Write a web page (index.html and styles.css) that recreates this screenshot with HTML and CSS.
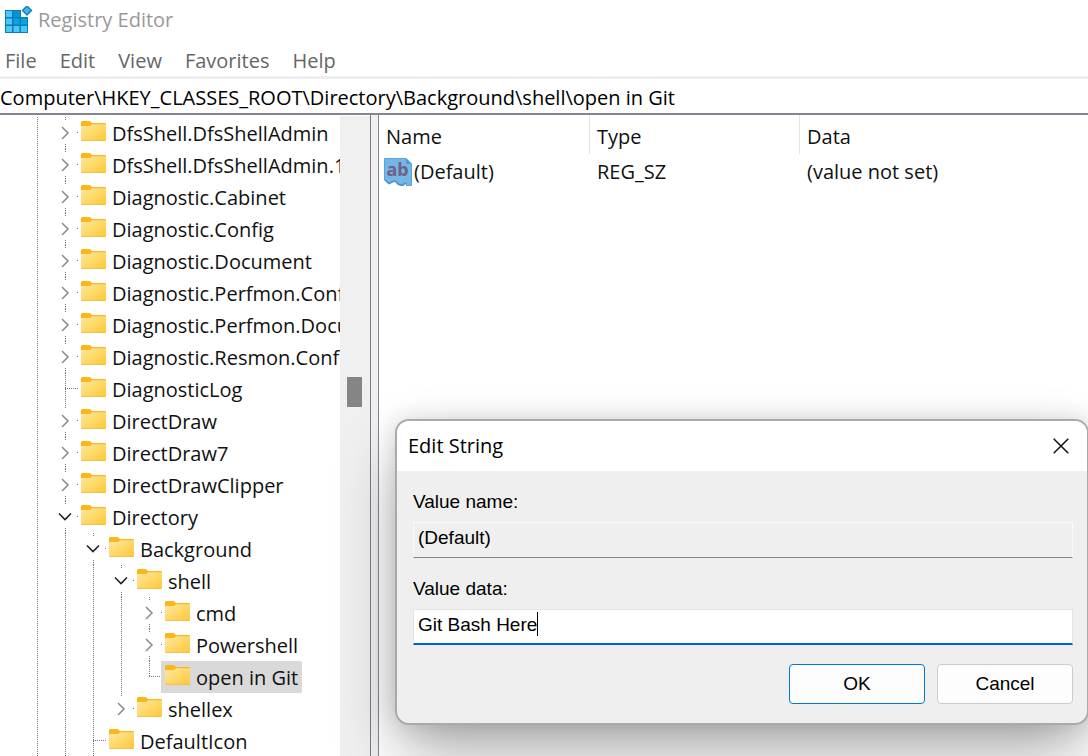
FILE: index.html
```html
<!DOCTYPE html>
<html lang="en">
<head>
<meta charset="utf-8">
<title>Registry Editor</title>
<link rel="stylesheet" href="styles.css">
</head>
<body>
<svg class="defs" width="0" height="0" aria-hidden="true">
  <defs>
    <linearGradient id="folder-face" x1="0" y1="0" x2="1" y2="1">
      <stop offset="0" stop-color="#ffe8a2"/><stop offset="1" stop-color="#ffc733"/>
    </linearGradient>
    <symbol id="folder" viewBox="0 0 25 20">
      <path d="M0 1.500Q0 0 1.500 0H8Q9 0 9.700 .7L11 2H24Q25 2 25 3V18H0Z" fill="#f9b71c"/>
      <path d="M0 6Q0 5 1 5H8.500Q9.500 5 10.200 4.200L11 3.200H25V18.500Q25 20 23.500 20H1.500Q0 20 0 18.500Z" fill="url(#folder-face)"/>
      <path d="M.5 19.400H24.500" stroke="#eebc45" stroke-width=".8"/>
    </symbol>
    <symbol id="closed" viewBox="0 0 14 14"><path d="M4 1L10 7L4 13" fill="none" stroke="#8b8b8b" stroke-width="1.500"/></symbol>
    <symbol id="open" viewBox="0 0 14 14"><path d="M1 3.500L7 9.500L13 3.500" fill="none" stroke="#222" stroke-width="1.600"/></symbol>
  </defs>
</svg>
<div class="window">
  <header class="titlebar">
    <svg class="app-icon" viewBox="0 0 28 28" aria-hidden="true">
      <path d="M0 4H16V11H23V27H0Z" fill="#087db8"/>
      <path d="M1 5H7V11H1ZM1 12.500H7V18.500H1ZM1 20H7V26H1ZM8.500 20H14.500V26H8.500ZM16 20H22V26H16Z" fill="#4fc6f8"/>
      <path d="M8.500 5H15V11H8.500Z" fill="#0b93cf"/>
      <path d="M8.500 12.500H14.500V18.500H8.500ZM16 12.500H22V18.500H16Z" fill="#08a5e2"/>
      <path d="M22 0L26.500 4.500L22 9L17.500 4.500Z" fill="#3fb5ea" stroke="#147caf" stroke-width="1.400" stroke-linejoin="round"/>
    </svg>
    <h1>Registry Editor</h1>
  </header>
  <nav class="menubar">
    <button type="button">File</button><button type="button">Edit</button><button type="button">View</button><button type="button">Favorites</button><button type="button">Help</button>
  </nav>
  <input class="address" aria-label="Address" value="Computer\HKEY_CLASSES_ROOT\Directory\Background\shell\open in Git">
  <main class="panes">
    <section class="tree-pane">
      <ul class="tree">
        <li class="row"><i class="guide"></i><i class="node"><svg><use href="#closed"/></svg></i><svg class="folder"><use href="#folder"/></svg><span>DfsShell.DfsShellAdmin</span></li>
        <li class="row"><i class="guide"></i><i class="node"><svg><use href="#closed"/></svg></i><svg class="folder"><use href="#folder"/></svg><span>DfsShell.DfsShellAdmin.1</span></li>
        <li class="row"><i class="guide"></i><i class="node"><svg><use href="#closed"/></svg></i><svg class="folder"><use href="#folder"/></svg><span>Diagnostic.Cabinet</span></li>
        <li class="row"><i class="guide"></i><i class="node"><svg><use href="#closed"/></svg></i><svg class="folder"><use href="#folder"/></svg><span>Diagnostic.Config</span></li>
        <li class="row"><i class="guide"></i><i class="node"><svg><use href="#closed"/></svg></i><svg class="folder"><use href="#folder"/></svg><span>Diagnostic.Document</span></li>
        <li class="row"><i class="guide"></i><i class="node"><svg><use href="#closed"/></svg></i><svg class="folder"><use href="#folder"/></svg><span>Diagnostic.Perfmon.Conf</span></li>
        <li class="row"><i class="guide"></i><i class="node"><svg><use href="#closed"/></svg></i><svg class="folder"><use href="#folder"/></svg><span>Diagnostic.Perfmon.Docu</span></li>
        <li class="row"><i class="guide"></i><i class="node"><svg><use href="#closed"/></svg></i><svg class="folder"><use href="#folder"/></svg><span>Diagnostic.Resmon.Conf</span></li>
        <li class="row"><i class="guide"></i><i class="node leaf"></i><svg class="folder"><use href="#folder"/></svg><span>DiagnosticLog</span></li>
        <li class="row"><i class="guide"></i><i class="node"><svg><use href="#closed"/></svg></i><svg class="folder"><use href="#folder"/></svg><span>DirectDraw</span></li>
        <li class="row"><i class="guide"></i><i class="node"><svg><use href="#closed"/></svg></i><svg class="folder"><use href="#folder"/></svg><span>DirectDraw7</span></li>
        <li class="row"><i class="guide"></i><i class="node"><svg><use href="#closed"/></svg></i><svg class="folder"><use href="#folder"/></svg><span>DirectDrawClipper</span></li>
        <li class="row"><i class="guide"></i><i class="node"><svg><use href="#open"/></svg></i><svg class="folder"><use href="#folder"/></svg><span>Directory</span></li>
        <li class="row"><i class="guide"></i><i class="guide"></i><i class="node"><svg><use href="#open"/></svg></i><svg class="folder"><use href="#folder"/></svg><span>Background</span></li>
        <li class="row"><i class="guide"></i><i class="guide"></i><i class="guide"></i><i class="node"><svg><use href="#open"/></svg></i><svg class="folder"><use href="#folder"/></svg><span>shell</span></li>
        <li class="row"><i class="guide"></i><i class="guide"></i><i class="guide"></i><i class="guide"></i><i class="node"><svg><use href="#closed"/></svg></i><svg class="folder"><use href="#folder"/></svg><span>cmd</span></li>
        <li class="row"><i class="guide"></i><i class="guide"></i><i class="guide"></i><i class="guide"></i><i class="node"><svg><use href="#closed"/></svg></i><svg class="folder"><use href="#folder"/></svg><span>Powershell</span></li>
        <li class="row selected"><i class="guide"></i><i class="guide"></i><i class="guide"></i><i class="guide"></i><i class="node leaf last"></i><svg class="folder"><use href="#folder"/></svg><span>open in Git</span></li>
        <li class="row"><i class="guide"></i><i class="guide"></i><i class="guide"></i><i class="node last"><svg><use href="#closed"/></svg></i><svg class="folder"><use href="#folder"/></svg><span>shellex</span></li>
        <li class="row"><i class="guide"></i><i class="guide"></i><i class="node leaf"></i><svg class="folder"><use href="#folder"/></svg><span>DefaultIcon</span></li>
      </ul>
      <div class="scrollbar"><div class="thumb"></div></div>
    </section>
    <section class="values">
      <table>
        <colgroup><col class="c-name"><col class="c-type"><col></colgroup>
        <thead><tr><th>Name</th><th>Type</th><th>Data</th></tr></thead>
        <tbody><tr>
          <td><div class="value-name"><svg class="string-icon" viewBox="0 0 28 28" aria-hidden="true"><path d="M.5 .5H22L27.500 6V27.500H22.500V25L18 27.500L13.500 26L12 23.500H9L5 25.500L.5 22Z" fill="#75b6e7" stroke="#5aa3da"/><path d="M22 0V6H28Z" fill="#5799cd"/><path d="M1 22L5 25.500L9 23.500H12L14 26L18 27.500L22 25" fill="none" stroke="#4c91c5" stroke-width="1.500"/><text x="13.500" y="18" text-anchor="middle">ab</text></svg><span>(Default)</span></div></td>
          <td>REG_SZ</td><td>(value not set)</td>
        </tr></tbody>
      </table>
    </section>
  </main>
  <form class="dialog" role="dialog" aria-labelledby="dialog-title">
    <header><h2 id="dialog-title">Edit String</h2>
      <button class="close" type="button" aria-label="Close"><svg viewBox="0 0 16 16"><path d="M.7 .7L15.300 15.300M15.300 .7L.7 15.300" stroke="#111" stroke-width="1.500"/></svg></button></header>
    <div class="fields">
      <label for="value-name">Value name:</label>
      <input id="value-name" readonly value="(Default)">
      <label for="value-data">Value data:</label>
      <div class="edit"><input id="value-data" value="Git Bash Here"><i class="caret"></i></div>
      <div class="actions"><button class="primary" type="button">OK</button><button type="button">Cancel</button></div>
    </div>
  </form>
</div>
</body>
</html>
```
FILE: styles.css
```css
* { box-sizing: border-box; }
body { margin: 0; background: #fff; color: #111; font: 20px/32px "Open Sans", "Noto Sans", sans-serif; }
h1, h2 { margin: 0; font-size: inherit; font-weight: 400; }
button, input { font: inherit; color: inherit; margin: 0; }
.defs { position: absolute; }
.window { position: relative; display: flex; flex-direction: column; height: 100vh; overflow: hidden; }
.titlebar { display: flex; align-items: center; gap: 5px; height: 40px; padding: 0 5px; color: #999; }
.app-icon { width: 28px; height: 28px; }
.menubar { display: flex; align-items: center; gap: 23px; height: 39px; padding: 6px 5px 0; border-bottom: 3px solid #eee; }
.menubar button { padding: 0; border: 0; background: none; color: #666; }
.address { width: 100%; height: 36px; padding: 2px 0 0; border: 0; border-bottom: 2px solid #82868f; outline: 0; background: #fff; color: #000; }
.panes { flex: 1; display: flex; min-height: 0; background: #f0f0f0; }
.tree-pane { flex: none; display: flex; width: 371px; border-right: 1px solid #777b84; background: #fff; }
.tree { flex: 1; min-width: 0; margin: 0; padding: 2px 0 0 23px; overflow: hidden; list-style: none; }
.row { display: flex; align-items: center; height: 32px; white-space: nowrap; }
.guide, .node { flex: none; align-self: stretch; width: 28px; }
.guide { background: repeating-linear-gradient(#777 0 1px, transparent 1px 2px) 14px 0 / 1px 100% no-repeat; }
.node { display: flex; align-items: center; justify-content: center;
  background:
    repeating-linear-gradient(#777 0 1px, transparent 1px 2px) 14px 0 / 1px 3px no-repeat,
    repeating-linear-gradient(#777 0 1px, transparent 1px 2px) 14px 100% / 1px 5px no-repeat,
    linear-gradient(#777, #777) 26px 15px / 1px 1px no-repeat; }
.node.last { background:
    repeating-linear-gradient(#777 0 1px, transparent 1px 2px) 14px 0 / 1px 3px no-repeat,
    linear-gradient(#777, #777) 26px 15px / 1px 1px no-repeat; }
.node.leaf { background:
    repeating-linear-gradient(#777 0 1px, transparent 1px 2px) 14px 0 / 1px 100% no-repeat,
    repeating-linear-gradient(90deg, #777 0 1px, transparent 1px 2px) 14px 15px / 14px 1px no-repeat; }
.node.leaf.last { background:
    repeating-linear-gradient(#777 0 1px, transparent 1px 2px) 14px 0 / 1px 16px no-repeat,
    repeating-linear-gradient(90deg, #777 0 1px, transparent 1px 2px) 14px 15px / 12px 1px no-repeat,
    linear-gradient(#d9d9d9, #d9d9d9) 26px 0 / 2px 100% no-repeat; }
.node svg { width: 14px; height: 14px; }
.folder { flex: none; width: 25px; height: 20px; margin: 0 0 4px 2px; }
.row span { padding: 1px 0 0 6px; line-height: 31px; }
.selected .folder { box-sizing: content-box; margin: 0; padding: 4px 0 8px 2px; background: #d9d9d9; }
.selected span { padding-right: 4px; border-radius: 0 2px 2px 0; background: #d9d9d9; }
.scrollbar { flex: none; width: 30px; margin-top: 1px; padding: 261px 8px 0 7px; background: #f0f0f0; }
.thumb { height: 30px; background: #858585; }
.values { flex: 1; margin-left: 7px; border-left: 1px solid #82868f; background: #fff; }
table { width: 100%; table-layout: fixed; border-collapse: separate; border-spacing: 0; text-align: left; }
.c-name { width: 211px; }
.c-type { width: 210px; }
th, td { height: 36px; padding: 0 0 0 7px; font-weight: 400; }
th { height: 39px; padding-top: 4px; border-right: 1px solid #e5e5e5; }
th:last-child { border-right: 0; }
td:first-child { padding-left: 5px; }
.value-name { display: flex; align-items: center; gap: 2px; }
.string-icon { flex: none; width: 28px; height: 28px; }
.string-icon text { font: bold 18px "Noto Sans", sans-serif; fill: #6e6288; }
.dialog { position: absolute; left: 395px; right: -1px; top: 419px; border: 2px solid #aaa; border-radius: 14px; background: #efefef; color: #000; box-shadow: 0 32px 64px -6px rgba(0, 0, 0, .34), 0 0 24px rgba(0, 0, 0, .14); }
.dialog header { display: flex; align-items: center; justify-content: space-between; height: 50px; padding: 0 18px 0 11px; border-radius: 12px 12px 0 0; background: #fff; }
.close { display: flex; padding: 0; border: 0; background: none; }
.close svg { width: 16px; height: 16px; }
.fields { display: flex; flex-direction: column; padding: 19px 14px 19px 16px; font: 19px/24px "Liberation Sans", Arial, sans-serif; }
.fields label { height: 24px; margin-bottom: 8px; }
.fields input { width: 100%; height: 36px; padding: 0 4px 4px; border: 1px solid #fafafa; border-bottom-color: #858585; outline: 0; background: #efefef; }
#value-name { margin-bottom: 19px; }
.edit { position: relative; display: flex; }
#value-data { border-color: #e5e5e5; border-bottom: 2px solid #0067c0; background: #fff; }
.caret { position: absolute; left: 124px; top: 3px; width: 1px; height: 24px; background: #000; }
.actions { display: flex; justify-content: flex-end; gap: 12px; margin-top: 19px; }
.actions button { width: 136px; height: 40px; padding: 0; border: 1px solid #ccc; border-radius: 4px; background: #fdfdfd; }
.actions .primary { border-color: #0078d4; }
```
